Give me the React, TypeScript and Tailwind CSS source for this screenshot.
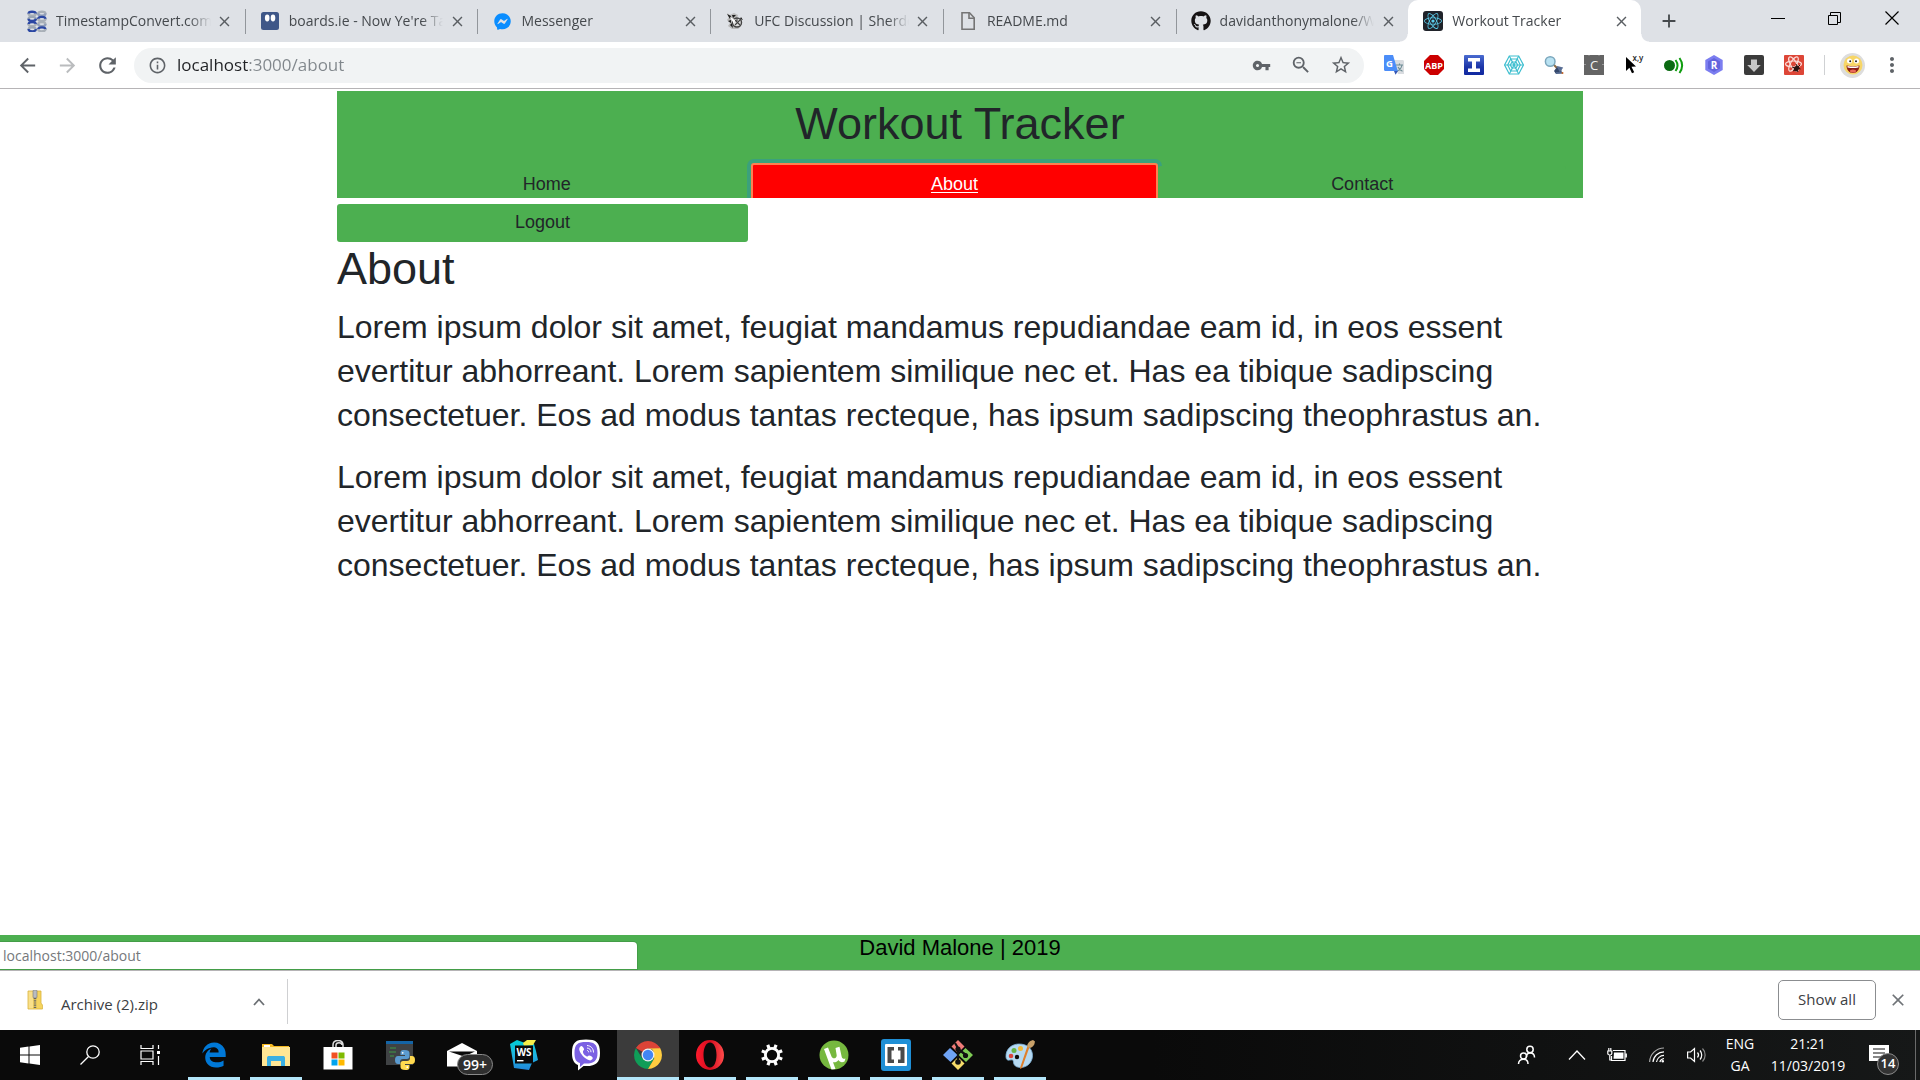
import React from "react";
import { FaEdgeLegacy, FaFacebookMessenger, FaGithub, FaReact } from "react-icons/fa";
import {
  MdAdd,
  MdArrowBack,
  MdArrowForward,
  MdClose,
  MdInfoOutline,
  MdMoreVert,
  MdRefresh,
  MdStarBorder,
  MdVpnKey,
  MdZoomOut,
} from "react-icons/md";

const LOREM =
  "Lorem ipsum dolor sit amet, feugiat mandamus repudiandae eam id, in eos essent evertitur abhorreant. Lorem sapientem similique nec et. Has ea tibique sadipscing consectetuer. Eos ad modus tantas recteque, has ipsum sadipscing theophrastus an.";

/* ---------- Favicons ---------- */

function TimestampIcon() {
  return (
    <svg viewBox="0 0 20 22" className="h-[22px] w-5 shrink-0">
      {[0, 1, 2, 3].map((row) => (
        <g key={row} transform={`translate(0 ${row * 5.2})`} fill="none" strokeWidth="2.300">
          <path d="M1.500 4c0-3 7-3 7.500 0" stroke={row % 2 ? "#9aa6b5" : "#2b47a3"} />
          <path d="M11 4c.5-3 7.500-3 7.500 0" stroke={row % 2 ? "#2b47a3" : "#a9b0b8"} />
          <path d="M1.500 3.500c0 3 7 3 7.500 0" stroke={row % 2 ? "#2b47a3" : "#a9b0b8"} />
          <path d="M11 3.500c.5 3 7.500 3 7.500 0" stroke={row % 2 ? "#a9b0b8" : "#8f9db8"} />
        </g>
      ))}
    </svg>
  );
}

function BoardsIcon() {
  return (
    <svg viewBox="0 0 18 18" className="size-[18px]">
      <rect width="18" height="18" rx="2.500" fill="#3f5788" />
      <ellipse cx="6.200" cy="6" rx="2.300" ry="3.400" fill="#fff" />
      <ellipse cx="12" cy="6" rx="2.300" ry="3.400" fill="#fff" />
    </svg>
  );
}

function SherdogIcon() {
  return (
    <svg viewBox="0 0 18 18" className="size-[18px]">
      <path d="M1 1l3 2 4-2 4 2-1 3 5 3-1 5-3 3H6L2 14l2-3-3-3 2-3z" fill="#b8b8b8" />
      <path d="M1 2l4 2-1 3zM6 3l4 0-3 3zM2 9l3-1v3zM4 13l2-2 1 5zM15 5l2 3-3-1z" fill="#1c1c1c" />
      <circle cx="11" cy="10.500" r="4.500" fill="#dcdcdc" stroke="#444" strokeWidth="1.400" />
      <path d="M9 8l5 5M14 8l-5 5M11 6v3" stroke="#444" strokeWidth="1.100" />
      <path d="M4 5l5 3-1 4z" fill="#fff" />
    </svg>
  );
}

function FileIcon() {
  return (
    <svg viewBox="0 0 18 20" className="h-5 w-[18px]" fill="none" stroke="#757575" strokeWidth="1.600">
      <path d="M3 1.800h7.500l4.700 5V18.200H3z" />
      <path d="M10 2v5.200h5" />
    </svg>
  );
}

function ReactFavicon() {
  return (
    <span className="flex size-5 shrink-0 items-center justify-center rounded-[3px] bg-[#20232a]">
      <FaReact className="size-[18px] text-[#5ccfee]" />
    </span>
  );
}

const TABS = [
  { title: "TimestampConvert.com", icon: <TimestampIcon /> },
  { title: "boards.ie - Now Ye're Ta", icon: <BoardsIcon /> },
  { title: "Messenger", icon: <FaFacebookMessenger className="size-[17px] text-[#0a8dff]" /> },
  { title: "UFC Discussion | Sherdo", icon: <SherdogIcon /> },
  { title: "README.md", icon: <FileIcon /> },
  { title: "davidanthonymalone/W", icon: <FaGithub className="size-5 shrink-0 text-[#161314]" /> },
  { title: "Workout Tracker", icon: <ReactFavicon />, active: true },
];

function TabStrip() {
  return (
    <div className="flex h-[42px] bg-[#dee1e6] pl-3">
      <div role="tablist" aria-label="Open tabs" className="flex w-[1629px]">
        {TABS.map((tab, i) => (
          <div
            key={tab.title}
            className={
              tab.active
                ? "relative flex min-w-0 flex-1 items-center rounded-t-[10px] bg-white pr-3 pl-4"
                : "relative flex min-w-0 flex-1 items-center pr-3 pl-4"
            }
          >
            <button role="tab" aria-selected={!!tab.active} className="flex min-w-0 flex-1 items-center gap-2.5">
              <span className="flex w-[18px] shrink-0 items-center justify-center">{tab.icon}</span>
              <span className="min-w-0 flex-1 overflow-hidden text-left text-[14px] leading-5 whitespace-nowrap text-[#45494d] [mask-image:linear-gradient(90deg,#000_86%,transparent)]">
                {tab.title}
              </span>
            </button>
            <button aria-label={`Close ${tab.title}`} className="ml-1.5 flex size-4 items-center justify-center text-[#5a5e62]">
              <MdClose className="size-[17px] shrink-0" />
            </button>
            {i < 5 && <span className="absolute top-[9px] -right-px h-[25px] w-px bg-[#92969b]" />}
            {tab.active && (
              <>
                <span className="absolute bottom-0 -left-2 size-2 bg-[radial-gradient(circle_at_0_0,transparent_7px,white_8px)]" />
                <span className="absolute -right-2 bottom-0 size-2 bg-[radial-gradient(circle_at_100%_0,transparent_7px,white_8px)]" />
              </>
            )}
          </div>
        ))}
      </div>
      <button aria-label="New tab" className="ml-4 flex w-6 items-center justify-center text-[#45494d]">
        <MdAdd className="size-[22px]" />
      </button>
      <div className="ml-auto flex h-9">
        <button aria-label="Minimise" className="flex w-[57px] items-center justify-center">
          <span className="h-px w-3.5 bg-black" />
        </button>
        <button aria-label="Restore" className="flex w-[57px] items-center justify-center">
          <svg viewBox="0 0 13 13" className="size-[13px]" fill="none" stroke="#000">
            <path d="M.5 3.500h9v9h-9zM2.500 3.500v-3h10v10h-3" />
          </svg>
        </button>
        <button aria-label="Close window" className="flex w-[57px] items-center justify-center">
          <svg viewBox="0 0 14 14" className="size-3.5" fill="none" stroke="#000" strokeWidth="1.200">
            <path d="M.5.5l13 13M13.500.5l-13 13" />
          </svg>
        </button>
      </div>
    </div>
  );
}

/* ---------- Toolbar extensions ---------- */

const EXTENSIONS = [
  {
    label: "Google Translate",
    icon: (
      <svg viewBox="0 0 20 20" className="size-5">
        <path d="M9 5h9.500c.8 0 1.500.7 1.500 1.500V19H14z" fill="#d9dce0" />
        <path d="M12 10h7M15.500 8.500v2M13 16c3-1 4.500-3 5-6M14 12c1 2 2.500 3.500 4.500 4.200" stroke="#6a8a93" strokeWidth="1.100" fill="none" />
        <path d="M1.200 0H9l4.800 16H1.200C.5 16 0 15.500 0 14.800V1.200C0 .5.500 0 1.200 0z" fill="#4b8df8" />
        <path d="M10 16h4l-2.500 3.800z" fill="#3557b5" />
        <text x="2" y="11.500" fontSize="9.500" fontWeight="700" fill="#fff" fontFamily="Open Sans, sans-serif">G</text>
      </svg>
    ),
  },
  {
    label: "Adblock Plus",
    icon: (
      <svg viewBox="0 0 20 20" className="size-5">
        <path d="M6 0h8l6 6v8l-6 6H6l-6-6V6z" fill="#cc0000" />
        <text x="10" y="13.500" textAnchor="middle" fontSize="9" fontWeight="700" fill="#fff" fontFamily="Open Sans, sans-serif">ABP</text>
      </svg>
    ),
  },
  {
    label: "Instapaper",
    icon: (
      <svg viewBox="0 0 20 20" className="size-5">
        <defs>
          <linearGradient id="blueTile" x1="0" y1="0" x2="0" y2="1">
            <stop offset="0" stopColor="#4a6bd0" />
            <stop offset=".6" stopColor="#1c35a8" />
            <stop offset="1" stopColor="#1028a0" />
          </linearGradient>
        </defs>
        <rect width="20" height="20" rx="1" fill="url(#blueTile)" />
        <path d="M4 3h12v3.500h-4v7h4V17H4v-3.500h4v-7H4z" fill="#fff" />
      </svg>
    ),
  },
  {
    label: "Web inspector",
    icon: (
      <svg viewBox="0 0 20 20" className="size-5" fill="none" stroke="#3fbfd0" strokeWidth="1.200">
        <path d="M5.300 1h9.400L19.400 10l-4.700 9H5.300L.6 10z" />
        <path d="M6.700 4h6.600l3 6-3 6H6.700l-3-6z" />
        <path d="M8 7h4l1.700 3L12 13H8l-1.700-3z" />
        <path d="M5.300 1l9.400 18M14.700 1L5.300 19M.6 10h18.800" />
      </svg>
    ),
  },
  {
    label: "Element search",
    icon: (
      <svg viewBox="0 0 20 20" className="size-5">
        <path d="M9 9l4 4" stroke="#8a6a45" strokeWidth="2" />
        <circle cx="6.200" cy="6.500" r="4.800" fill="#b9e2f2" stroke="#7ba7bd" strokeWidth="1.500" />
        <path d="M10 16l3-4 4 2 1 4-6 1z" fill="#33476b" />
        <path d="M14 12l4 1-2 3zM12 18l7 0" stroke="#5a6f95" strokeWidth="1.500" fill="#46608f" />
        <circle cx="18.500" cy="18" r="1" fill="#c96a2b" />
      </svg>
    ),
  },
  {
    label: "Clear cache",
    icon: (
      <svg viewBox="0 0 20 20" className="size-5">
        <rect width="20" height="20" fill="#646464" />
        <path d="M0 9.500h2M18 9.500h2M5 0v1M15 0v1" stroke="#999" />
        <text x="10" y="14.800" textAnchor="middle" fontSize="13" fill="#f2f2f2" fontFamily="Open Sans, sans-serif">C</text>
      </svg>
    ),
  },
  {
    label: "Coordinates",
    icon: (
      <svg viewBox="0 0 20 20" className="size-5 overflow-visible">
        <path d="M2 2l10 9.500-4.500.3 2.700 5.500-2.200 1-2.600-5.600L2 16z" fill="#000" />
        <text x="8.500" y="5.500" fontSize="8" fontWeight="600" fill="#222" fontFamily="Open Sans, sans-serif">x,y</text>
      </svg>
    ),
  },
  {
    label: "Broadcast",
    icon: (
      <svg viewBox="0 0 20 20" className="size-5" fill="none" stroke="#0f9d0f" strokeWidth="2">
        <circle cx="5.500" cy="10.500" r="5.500" fill="#0b6a12" stroke="none" />
        <path d="M11.500 5c2.600 3.500 2.600 7.500 0 11M15.500 3c3.500 5 3.500 10 0 15" />
      </svg>
    ),
  },
  {
    label: "R extension",
    icon: (
      <svg viewBox="0 0 20 20" className="size-5">
        <path d="M10 0l8.700 5v10L10 20l-8.700-5V5z" fill="#7b7df0" />
        <path d="M10 3l6 3.500v7L10 17l-6-3.500v-7z" fill="#6264dd" />
        <text x="10" y="13.800" textAnchor="middle" fontSize="10" fontWeight="700" fill="#fff" fontFamily="Open Sans, sans-serif">R</text>
      </svg>
    ),
  },
  {
    label: "Downloader",
    icon: (
      <svg viewBox="0 0 20 20" className="size-5">
        <rect width="20" height="20" rx="2" fill="#3b3b3b" />
        <path d="M7 4.500h6V10h3.800L10 17l-6.800-7H7z" fill="#c6c6c6" />
      </svg>
    ),
  },
  {
    label: "React Developer Tools",
    icon: (
      <svg viewBox="0 0 20 20" className="size-5">
        <rect width="20" height="20" rx="1" fill="#dd4637" />
        <g fill="none" stroke="#fbdcd8" strokeWidth="1.200" transform="translate(9.500 9)">
          <ellipse rx="8" ry="3" />
          <ellipse rx="8" ry="3" transform="rotate(60)" />
          <ellipse rx="8" ry="3" transform="rotate(120)" />
        </g>
        <ellipse cx="12.500" cy="13.500" rx="2.400" ry="3.200" fill="#2a1210" transform="rotate(35 12.500 13.500)" />
        <path d="M8 12l3 1M9 16l2-1M14 17l-1-2M16.500 14l-3-1M12 9l1 2M16 10l-2 2" stroke="#2a1210" strokeWidth="1" />
      </svg>
    ),
  },
];

function Toolbar() {
  return (
    <div className="flex h-[47px] items-center border-b border-[#b6b4b6] bg-white px-3.5 text-[#5f6368]">
      <button aria-label="Back" className="mr-3.5 flex size-[26px] items-center justify-center">
        <MdArrowBack className="size-[23px]" />
      </button>
      <button aria-label="Forward" className="mr-3.5 flex size-[26px] items-center justify-center text-[#babcbe]">
        <MdArrowForward className="size-[23px]" />
      </button>
      <button aria-label="Reload" className="mr-3.5 flex size-[26px] items-center justify-center">
        <MdRefresh className="size-[25px]" />
      </button>
      <div className="flex h-[35px] min-w-0 flex-1 items-center rounded-full bg-[#f1f3f4] pr-[11px] pl-3.5">
        <MdInfoOutline className="size-[19px] shrink-0" />
        <input
          aria-label="Address"
          defaultValue="localhost:3000/about"
          className="ml-2.5 min-w-0 flex-1 bg-[linear-gradient(90deg,#202124_71px,#80868b_71px)] bg-clip-text text-[17px] leading-6 text-transparent outline-none"
        />
        <button aria-label="Saved passwords" className="flex w-10 justify-center">
          <MdVpnKey className="size-[19px]" />
        </button>
        <button aria-label="Zoom" className="flex w-10 justify-center">
          <MdZoomOut className="size-[22px]" />
        </button>
        <button aria-label="Bookmark this page" className="-mr-2 flex w-10 justify-center">
          <MdStarBorder className="size-[22px]" />
        </button>
      </div>
      <div className="ml-2.5 flex">
        {EXTENSIONS.map((ext) => (
          <button key={ext.label} aria-label={ext.label} className="flex w-10 justify-center">
            {ext.icon}
          </button>
        ))}
      </div>
      <span className="mx-2.5 h-5 w-px bg-[#cfd1d3]" />
      <button aria-label="Profile" className="ml-[5px] flex size-[25px] items-center justify-center rounded-full bg-[#dddddd]">
        <svg viewBox="0 0 20 20" className="size-5">
          <circle cx="10" cy="10" r="9.500" fill="#f7d667" />
          <path d="M3.500 10.500c4 1 9 1 13 0 0 4-2.500 7.500-6.500 7.500s-6.500-3.500-6.500-7.500z" fill="#8c1d14" />
          <path d="M4.500 11c4 .8 7.500.8 11 0v1.500c-3.500.8-7.500.8-11 0z" fill="#fff" />
          <ellipse cx="10" cy="16" rx="3" ry="1.500" fill="#ea6a5a" />
          <circle cx="6.500" cy="6" r="2.500" fill="#fff" />
          <circle cx="13.500" cy="6" r="2.500" fill="#fff" />
          <circle cx="7.200" cy="6.300" r="1" fill="#222" />
          <circle cx="13" cy="6.300" r="1" fill="#222" />
        </svg>
      </button>
      <button aria-label="Menu" className="ml-[13px] flex w-7 justify-center">
        <MdMoreVert className="size-6" />
      </button>
    </div>
  );
}

/* ---------- Page ---------- */

function WorkoutPage() {
  return (
    <div className="flex flex-1 flex-col font-['Liberation_Sans',Arial,sans-serif] text-[#212529]">
      <div className="mx-auto w-full max-w-[1246px] flex-1 pt-0.5">
        <header className="overflow-hidden bg-[#4caf50] pt-1.5">
          <h1 className="text-center text-[45px] leading-[54px]">Workout Tracker</h1>
          <nav className="mt-3 mr-[17px] ml-1.5 grid h-[35px] grid-cols-3 text-center text-[18px] leading-[27px]">
            <a href="#home" className="h-10 pt-2">
              Home
            </a>
            <a
              href="#about"
              className="h-10 rounded-[3px] border-2 border-[#ff7f50] bg-[#ff0000] pt-1.5 text-white underline underline-offset-2 shadow-[0_0_0_4px_#3ba17c]"
            >
              About
            </a>
            <a href="#contact" className="mt-[3px] h-10 rounded-[3px] bg-[#4caf50] pt-[5px]">
              Contact
            </a>
          </nav>
        </header>
        <button className="mt-1.5 block w-[411px] rounded-[3px] bg-[#4caf50] pt-[5px] pb-1.5 text-center text-[18px] leading-[27px]">
          Logout
        </button>
        <main>
          <h2 className="text-[45px] leading-[54px]">About</h2>
          <p className="mt-[9px] text-[32px] leading-[44px]">{LOREM}</p>
          <p className="mt-[18px] text-[32px] leading-[44px]">{LOREM}</p>
        </main>
      </div>
      <footer className="relative h-[35px] bg-[#4caf50] text-center text-[22px] leading-[26px] text-black">
        David Malone | 2019
        <div
          role="status"
          className="absolute bottom-px left-0 h-[27px] w-[637px] rounded-tr-[4px] bg-white pl-[3px] text-left font-['Open_Sans',sans-serif] text-[14px] leading-7 text-[#75787b] shadow-[0_0_0_1px_#439d47]"
        >
          localhost:3000/about
        </div>
      </footer>
    </div>
  );
}

function DownloadShelf() {
  return (
    <section aria-label="Downloads" className="flex h-[60px] items-center border-t border-[#b6b4b6] bg-white pb-0.5 text-[#3c4043]">
      <div className="mt-1 flex h-[45px] w-[288px] items-center border-r border-[#cfd0d2] pl-[27px]">
        <svg viewBox="0 0 16 20" className="-mt-1 h-5 w-4">
          <path d="M1 1h13v13h1v5H1z" fill="#f5d45e" />
          <path d="M1 1h5v18H1z" fill="#f9e08a" />
          <path d="M1 1h13v12l1.500 2v4H1z" fill="none" stroke="#d9b23a" strokeWidth=".8" />
          <rect x="6" y="0" width="4" height="8" rx="1" fill="#b9bcc0" stroke="#777" strokeWidth=".6" />
          <path d="M8 8v11" stroke="#666" strokeWidth="2.500" strokeDasharray="1.200 1" />
        </svg>
        <a href="#archive" className="mt-1 ml-[18px] text-[15px] leading-5">
          Archive (2).zip
        </a>
        <button aria-label="Download options" className="mr-5 ml-auto flex size-4 items-center justify-center">
          <svg viewBox="0 0 12 8" className="h-2 w-3" fill="none" stroke="#6b6f73" strokeWidth="1.800">
            <path d="M1 7l5-5.500L11 7" />
          </svg>
        </button>
      </div>
      <button className="ml-auto h-10 w-[98px] rounded-[5px] border border-[#8b8d90] text-[15px]">Show all</button>
      <button aria-label="Close downloads bar" className="mr-3 ml-3 flex size-5 items-center justify-center text-[#6f7377]">
        <MdClose className="size-5" />
      </button>
    </section>
  );
}

/* ---------- Taskbar ---------- */

const SYSTEM_BUTTONS = [
  {
    label: "Start",
    icon: (
      <svg viewBox="0 0 20 20" className="size-5" fill="#fff">
        <path d="M0 2.800l8.500-1.200V9.500H0zM9.500 1.400L20 0v9.500H9.500zM0 10.500h8.500v7.900L0 17.200zM9.500 10.500H20V20L9.500 18.600z" />
      </svg>
    ),
  },
  {
    label: "Search",
    icon: (
      <svg viewBox="0 0 20 20" className="size-5" fill="none" stroke="#fff" strokeWidth="1.300">
        <circle cx="13" cy="7" r="6.200" />
        <path d="M8.500 11.500L.5 19.500" />
      </svg>
    ),
  },
  {
    label: "Task view",
    icon: (
      <svg viewBox="0 0 20 20" className="size-5" fill="none" stroke="#fff" strokeWidth="1.200">
        <path d="M1 0v3.500h12V0M1 20v-3.500h12V20M1 6h12v8H1zM18.500 0v4M18.500 11v9" />
        <path d="M17 6h3v3h-3z" fill="#fff" stroke="none" />
      </svg>
    ),
  },
];

const APPS = [
  { label: "Edge", open: true, icon: <FaEdgeLegacy className="size-[26px] text-[#0078d7]" /> },
  {
    label: "File Explorer",
    open: true,
    icon: (
      <svg viewBox="0 0 28 24" className="h-6 w-7">
        <path d="M0 1h10l2 2h15v20H0z" fill="#f5b921" />
        <path d="M0 4h28v19H0z" fill="#ffe694" />
        <path d="M2 2h6v2H2z" fill="#fff" />
        <path d="M5 23v-8c0-1.500.8-2 2-2h14c1.200 0 2 .5 2 2v8h-4v-5H9v5z" fill="#3bb0e3" />
      </svg>
    ),
  },
  {
    label: "Store",
    icon: (
      <svg viewBox="0 0 30 30" className="size-[30px]">
        <path d="M10 9V5c0-4 3-4.500 5-4.500S20 1 20 5v4M13 9V5c0-3 6-3 6 0" fill="none" stroke="#ddd" strokeWidth="1.500" />
        <path d="M.5 7h29v22.500h-29z" fill="#fff" />
        <path d="M8.500 12.500h6v6h-6z" fill="#f25022" />
        <path d="M15.500 12.500h6v6h-6z" fill="#7fba00" />
        <path d="M8.500 19.500h6v6h-6z" fill="#00a4ef" />
        <path d="M15.500 19.500h6v6h-6z" fill="#ffb900" />
      </svg>
    ),
  },
  {
    label: "Python",
    icon: (
      <svg viewBox="0 0 29 29" className="size-[29px]">
        <path d="M0 1h27v23H0z" fill="#3f4244" />
        <path d="M0 0h27v3H0z" fill="#1464a5" />
        <path d="M4 7h6M3 11h7M4 15h4" stroke="#3f9a44" strokeWidth="1" />
        <g transform="translate(9 9)">
          <path d="M9.500 0C5.500 0 5.500 1.500 5.500 3v2H10v1H3C1 6 0 7.500 0 10s1 4 3 4h2v-2c0-2 1-3 3-3h4c1.500 0 2.500-1 2.500-2.500V3C14.500 1 13 0 9.500 0z" fill="#5b9bd0" />
          <path d="M10.500 20c4 0 4-1.500 4-3v-2H10v-1h7c2 0 3-1.500 3-4s-1-4-3-4h-2v2c0 2-1 3-3 3H8c-1.500 0-2.500 1-2.500 2.500V17c0 2 1.500 3 5 3z" fill="#ffd94f" />
          <circle cx="7.700" cy="2.800" r=".9" fill="#fff" />
          <circle cx="12.300" cy="17.200" r=".9" fill="#fff" />
        </g>
      </svg>
    ),
  },
  {
    label: "Mail",
    icon: (
      <span className="relative block">
        <svg viewBox="0 0 30 24" className="h-6 w-[30px]">
          <path d="M0 8L15 0l15 8v15.500H0z" fill="#fff" />
          <path d="M2 8.500h26L17 13.500z" fill="#0a0a0a" />
        </svg>
        <span className="absolute top-[11px] left-2.5 flex h-[21px] w-9 items-center justify-center rounded-full border border-[#8a8a8a] bg-[#2f2f2f] text-[14px] font-semibold text-white">
          99+
        </span>
      </span>
    ),
  },
  {
    label: "WebStorm",
    icon: (
      <svg viewBox="0 0 28 30" className="h-[30px] w-7">
        <defs>
          <linearGradient id="stormEdge" x1="0" y1="0" x2="0" y2="1">
            <stop offset="0" stopColor="#00cdd7" />
            <stop offset=".5" stopColor="#1fb5e0" />
            <stop offset="1" stopColor="#2086d7" />
          </linearGradient>
        </defs>
        <path d="M0 4L7 0l8 3 9 1 2 7 2 9-6 3-3 7-15-2z" fill="url(#stormEdge)" />
        <path d="M13 3l4-3h9l-3 5-9 1z" fill="#f6ee4a" />
        <rect x="5" y="5.500" width="18" height="18" fill="#0a0a0a" />
        <text x="14" y="15.500" textAnchor="middle" fontSize="10" fontWeight="700" fill="#fff" fontFamily="Open Sans, sans-serif">WS</text>
        <path d="M7 20h6.500v1.400H7z" fill="#fff" />
      </svg>
    ),
  },
  {
    label: "Viber",
    icon: (
      <svg viewBox="0 0 30 32" className="h-8 w-[30px]">
        <path d="M15 .5C5 .5 1 3 1 14c0 6 1.500 10 6 12v5.500l5.500-4.500c12 .8 16.500-3 16.500-13C29 3 25 .5 15 .5z" fill="#fff" />
        <path d="M15 3C7 3 3.500 5 3.500 14c0 6 1.500 9 5.500 10v4l4-3.500c9 .5 13.500-2 13.500-10.500C26.500 5 23 3 15 3z" fill="#7b61e3" />
        <path d="M9.500 7.500c1-.9 1.800-.4 2.800 1 1.300 1.800.9 2.500-.3 3.500-.5 3 3 5.500 4.500 5.600 1-1.500 2-1.500 3.500-.5 2 1.300 2.200 2 1.200 3.200-1.300 1.500-2.500 1.500-5.200 0-4-2.200-7.500-7-7.800-10 0-1.200.5-2.100 1.300-2.800z" fill="#fff" />
        <path d="M16 6.500c4 .3 6.500 3 6.500 7M16 9c2.500.2 4 1.800 4 4.200M16 11.500c1 0 1.700.7 1.700 1.800" fill="none" stroke="#fff" />
      </svg>
    ),
  },
  {
    label: "Chrome",
    open: true,
    current: true,
    icon: (
      <svg viewBox="0 0 28 28" className="size-7">
        <path d="M14 14L1.900 7A14 14 0 0 1 26.100 7L14 7.500z" fill="#db4437" />
        <path d="M1.900 7A14 14 0 0 0 14 28l6.200-10.500L14 14 8 17z" fill="#0f9d58" />
        <path d="M26.100 7A14 14 0 0 1 14 28l6.200-10.500L19 9 14 7.200z" fill="#ffcd40" />
        <path d="M14 7.200h12.300L25 5.500 14 5z" fill="#db4437" />
        <circle cx="14" cy="14" r="6.500" fill="#f1f1f1" />
        <circle cx="14" cy="14" r="5.200" fill="#4285f4" />
      </svg>
    ),
  },
  {
    label: "Opera",
    open: true,
    icon: (
      <svg viewBox="0 0 30 30" className="size-[30px]">
        <defs>
          <linearGradient id="operaRed" x1="0" x2="1" y1="0" y2="0">
            <stop offset="0" stopColor="#ff1b2d" />
            <stop offset=".5" stopColor="#d50c1e" />
            <stop offset="1" stopColor="#ff4b4b" />
          </linearGradient>
        </defs>
        <path
          d="M15 0a14 15 0 1 0 0 30 14 15 0 0 0 0-30zm0 2.500c4 0 6.500 5.500 6.500 12.500S19 27.500 15 27.500 8.500 22 8.500 15 11 2.500 15 2.500z"
          fill="url(#operaRed)"
        />
      </svg>
    ),
  },
  {
    label: "Settings",
    open: true,
    icon: (
      <svg viewBox="0 0 24 24" className="size-6" fill="none" stroke="#fff">
        <circle cx="12" cy="12" r="6.600" strokeWidth="2.800" />
        {[22, 67, 112, 157, 202, 247, 292, 337].map((a) => (
          <path key={a} d="M12 1v4" strokeWidth="3.200" transform={`rotate(${a} 12 12)`} />
        ))}
      </svg>
    ),
  },
  {
    label: "uTorrent",
    open: true,
    icon: (
      <svg viewBox="0 0 30 30" className="size-[30px]">
        <circle cx="15" cy="15" r="14.500" fill="#76b83f" />
        <path
          d="M5 9l4-1.500 3.500 9c1.200 3 5.500 2 5.200-1.300L16.500 8l4-1.200 2.200 10c.5 2 2 2.300 3.800 1.800l-1 3c-2.800 1.200-4.800.5-6-1.600-1.500 2-3.500 2.700-5.500 2.200L16.500 29l-4 .5z"
          fill="#fff"
        />
      </svg>
    ),
  },
  {
    label: "Brackets",
    open: true,
    icon: (
      <svg viewBox="0 0 30 32" className="h-8 w-[30px]">
        <rect width="30" height="32" rx="3" fill="#1f8fd6" />
        <rect x="4" y="5" width="22" height="22" rx="1" fill="#fff" />
        <path d="M6.500 8H13v3.500h-2.500v9H13V24H6.500zM23.500 8H17v3.500h2.500v9H17V24h6.500z" fill="#4a4a4a" />
      </svg>
    ),
  },
  {
    label: "Git Bash",
    open: true,
    icon: (
      <svg viewBox="0 0 30 30" className="size-[30px]">
        <path d="M15 0l6.500 6.500L15 13 8.500 6.500z" fill="#f07c78" />
        <path d="M22.500 8L30 15l-7 7-7.500-7z" fill="#7ecb55" />
        <path d="M7 8l7.500 7L7.500 22 0 15z" fill="#6fa3f5" />
        <path d="M15 17l6.500 6.500L15 30l-6.500-6.500z" fill="#f7dc6a" />
        <path d="M12 3l3 5v14M15 9l8 6" stroke="#111" strokeWidth="2.200" fill="none" />
        <circle cx="15" cy="9" r="2.600" fill="#111" />
        <circle cx="15" cy="22" r="2.800" fill="#111" />
        <circle cx="22.500" cy="15.500" r="2.600" fill="#111" />
      </svg>
    ),
  },
  {
    label: "Paint",
    open: true,
    icon: (
      <svg viewBox="0 0 30 30" className="size-[30px]">
        <path d="M14 4C6 4 .5 10 1 17c.3 3 2 3.500 4 3 2-.4 3.500 0 3.500 2 0 3 2.500 5.500 7 5.500 7 0 12-5.500 12-12C27.500 8.500 22 4 14 4z" fill="#b5d9f2" stroke="#7fb2d8" strokeWidth=".8" />
        <circle cx="12" cy="17" r="2.200" fill="#0d0d0d" />
        <circle cx="6" cy="16" r="2.300" fill="#d9433b" />
        <circle cx="9" cy="10.500" r="2.500" fill="#67b346" />
        <circle cx="15.500" cy="8.500" r="2.500" fill="#f1b93a" />
        <path d="M24.500 7L17 28l-2 1 .5-2.500L22.500 6z" fill="#e07f2b" />
        <path d="M22 7c0-3 2-6 6-7l2 1.500c-.5 4-2.500 6-5 6.500z" fill="#c8a16a" />
      </svg>
    ),
  },
];

function Tray() {
  return (
    <div className="ml-auto flex items-center">
      <button aria-label="People" className="flex w-10 justify-center">
        <svg viewBox="0 0 20 20" className="size-5" fill="none" stroke="#fff" strokeWidth="1.500">
          <circle cx="13" cy="4.500" r="3.200" />
          <path d="M9.500 12c0-3 1.500-4 3.700-4s4.300 1.500 4.300 4.500" />
          <circle cx="6.500" cy="11" r="3" />
          <path d="M1.500 19c0-3 2-4.800 5-4.800s4.500 1.800 4.500 4.800" />
        </svg>
      </button>
      <button aria-label="Hidden icons" className="ml-2.5 flex w-10 justify-center">
        <svg viewBox="0 0 18 10" className="h-2.5 w-[18px]" fill="none" stroke="#fff" strokeWidth="1.300">
          <path d="M1 9.500l8-8.500 8 8.500" />
        </svg>
      </button>
      <button aria-label="Battery" className="flex w-10 justify-center">
        <svg viewBox="0 0 20 14" className="h-3.5 w-5" fill="none" stroke="#fff" strokeWidth="1.200">
          <path d="M6 2.500h12v10H4.500V8M19.300 5.500v4" />
          <path d="M7 4.500h9.500v6.300H6.500z" fill="#fff" stroke="none" />
          <path d="M.8 3h4v2.500c0 2-4 2-4 0zM1.800 0v3M3.800 0v3M2.800 7v5H5" />
        </svg>
      </button>
      <button aria-label="Network" className="flex w-10 justify-center">
        <svg viewBox="0 0 16 16" className="size-4" fill="none" stroke="#fff" strokeWidth="1.200">
          <path d="M.6 15A14.400 14.400 0 0 1 15 1" stroke="#aaa" />
          <path d="M4 15A11 11 0 0 1 15 4.800M7.500 15A8 8 0 0 1 15 8.300M10.800 15A5 5 0 0 1 15 11.500" />
          <circle cx="13.800" cy="14.200" r="1.200" fill="#fff" stroke="none" />
        </svg>
      </button>
      <button aria-label="Volume" className="flex w-10 justify-center">
        <svg viewBox="0 0 20 18" className="h-[18px] w-5" fill="none" stroke="#fff" strokeWidth="1.200">
          <path d="M.6 6h3L7.500 2.500v13L3.600 12h-3z" />
          <path d="M10.500 6.500c1.300 1.500 1.300 3.500 0 5M13 4.500c2.300 2.500 2.300 6.500 0 9" />
          <path d="M15.500 2.500c3.500 3.500 3.500 9.500 0 13" stroke="#888" />
        </svg>
      </button>
      <button className="ml-[3px] w-10 text-center text-[14px] leading-[22px]">
        ENG
        <br />
        GA
      </button>
      <button className="w-24 text-center text-[14px] leading-[22px]">
        21:21
        <br />
        11/03/2019
      </button>
      <button aria-label="Notifications" className="relative mr-[26px] ml-[13px] size-5">
        <svg viewBox="0 0 20 20" className="size-5">
          <path d="M0 0h20v16h-7l-3 4v-4H0z" fill="#fff" />
          <path d="M4 4h12M4 8h12M4 12h8" stroke="#111" strokeWidth="1.200" />
        </svg>
        <span className="absolute top-2 left-2 flex size-[22px] items-center justify-center rounded-full border border-[#8a8a8a] bg-[#333] text-[13px] font-semibold">
          14
        </span>
      </button>
      <span className="h-[50px] w-[5px] border-l border-[#6a6a6a]" />
    </div>
  );
}

function Taskbar() {
  return (
    <div className="flex h-[50px] bg-[linear-gradient(90deg,#0a0a0a_60%,#161818)] text-white">
      {SYSTEM_BUTTONS.map((b) => (
        <button key={b.label} aria-label={b.label} className="flex w-[60px] items-center justify-center">
          {b.icon}
        </button>
      ))}
      <div className="ml-[3px] flex">
        {APPS.map((app) => (
          <button
            key={app.label}
            aria-label={app.label}
            className={
              app.current
                ? "relative flex w-[62px] items-center justify-center bg-[#3b3b3b]"
                : "relative flex w-[62px] items-center justify-center"
            }
          >
            {app.icon}
            {app.open && (
              <span
                className={
                  app.current
                    ? "absolute inset-x-0 bottom-0 h-[3px] bg-[#b3e6fa]"
                    : "absolute inset-x-[5px] bottom-0 h-[3px] bg-[#b3e6fa]"
                }
              />
            )}
          </button>
        ))}
      </div>
      <Tray />
    </div>
  );
}

export default function App() {
  return (
    <div className="flex min-h-screen flex-col bg-white font-['Open_Sans',sans-serif]">
      <TabStrip />
      <Toolbar />
      <WorkoutPage />
      <DownloadShelf />
      <Taskbar />
    </div>
  );
}
